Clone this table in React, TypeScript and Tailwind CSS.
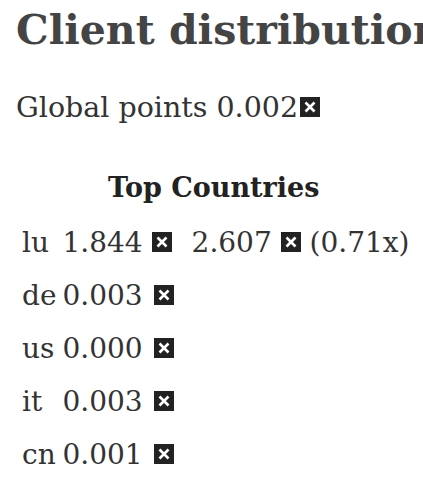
const serif = "font-['DejaVu_Serif','Liberation_Serif',serif]";

function XBox({ className = "" }: { className?: string }) {
  return (
    <svg
      className={`inline-block align-baseline ${className}`}
      width="20"
      height="20"
      viewBox="0 0 20 20"
    >
      <rect width="20" height="20" fill="#222" />
      <path d="M5.5 5.5 L14.5 14.5 M14.5 5.5 L5.5 14.5" stroke="#fff" strokeWidth="2.6" />
    </svg>
  );
}

const rows = [
  { code: "de", value: "0.003" },
  { code: "us", value: "0.000" },
  { code: "it", value: "0.003" },
  { code: "cn", value: "0.001" },
];

export default function App() {
  return (
    <div className={`w-[423px] h-[478px] overflow-hidden bg-white ${serif}`}>
      <div className="px-4 pt-[2px]">
        <h1 className="text-[41px] leading-[56px] font-bold text-[#444] whitespace-nowrap">
          Client distribution
        </h1>
        <p className="mt-[30px] text-[28.5px] leading-[40px] text-[#333] whitespace-nowrap">
          Global points 0.002<XBox className="ml-[2px]" />
        </p>

        <table className="mt-[40px] ml-[2px] text-[28px] text-[#333] border-separate border-spacing-0">
          <caption className="font-bold text-[#222] text-[27px] leading-[40px] pb-[8px]">
            Top Countries
          </caption>
          <tbody>
            <tr className="h-[53px]">
              <td className="pl-[4px] pr-[6px] align-middle">lu</td>
              <td className="pl-0 pr-[8px] align-middle whitespace-nowrap">
                1.844 <XBox />
              </td>
              <td className="pl-[10px] align-middle whitespace-nowrap">
                2.607 <XBox /> (0.71x)
              </td>
            </tr>
            {rows.map((r) => (
              <tr key={r.code} className="h-[53px]">
                <td className="pl-[4px] pr-[6px] align-middle">{r.code}</td>
                <td className="pl-0 pr-[8px] align-middle whitespace-nowrap">
                  {r.value} <XBox className="ml-[2px]" />
                </td>
              </tr>
            ))}
          </tbody>
        </table>
      </div>
    </div>
  );
}
